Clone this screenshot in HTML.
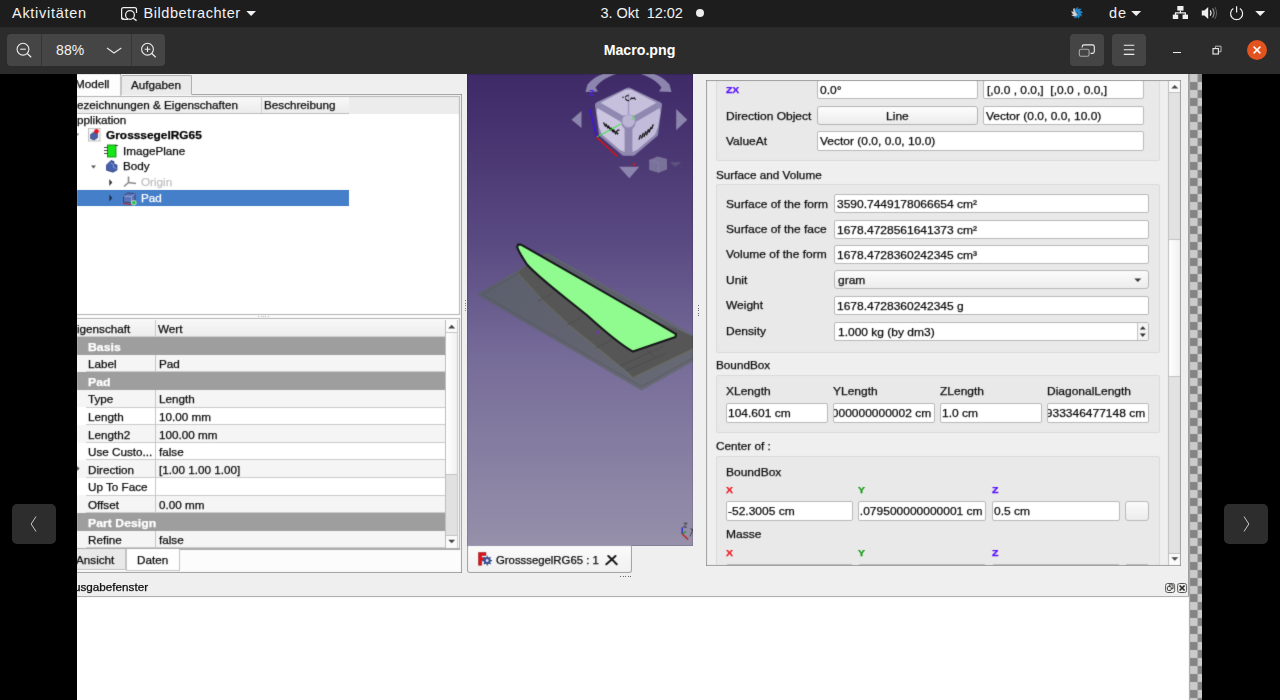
<!DOCTYPE html>
<html>
<head>
<meta charset="utf-8">
<title>Macro.png</title>
<style>
*{box-sizing:border-box;margin:0;padding:0}
html,body{width:1280px;height:700px;overflow:hidden;background:#000}
body{font-family:"Liberation Sans",sans-serif;position:relative;color:#fff}
.abs{position:absolute}
#topbar{left:0;top:0;width:1280px;height:27px;background:#1d1d1d;font-size:14.5px;color:#f2f2f2}
#topbar span{position:absolute;top:5.4px;white-space:nowrap}
#hdr{left:0;top:27px;width:1280px;height:47px;background:#2c2c2c;box-shadow:inset 0 1px 0 #272727}
.hbtn{position:absolute;background:#454545;border-radius:4px}
/* image area */
#img{left:77px;top:74px;width:1125px;height:626px;background:#efefef;overflow:hidden;color:#0e0e0e;font-size:11.5px}
#pg{filter:url(#soft)}
#img .t{position:absolute;white-space:nowrap;line-height:14.7px;-webkit-text-stroke:0.25px currentColor;transform:scaleX(1.09);transform-origin:0 0}
.box{position:absolute;background:#fff;border:1px solid #b9b9b9;border-radius:2px}
.grp{position:absolute;border:1px solid #dadada;background:#e9e9e9;border-radius:2px}
</style>
</head>
<body>
<!-- GNOME top bar -->
<div id="topbar" class="abs">
  <span style="left:12px;letter-spacing:0.72px">Aktivitäten</span>
  <svg class="abs" style="left:119px;top:5px" width="20" height="18" viewBox="119 5 20 18">
    <path d="M128 19.3 H123.5 Q121.6 19.3 121.6 17.4 V9.6 Q121.6 7.7 123.5 7.7 H134.6 Q136.5 7.7 136.5 9.6 V13" fill="none" stroke="#f0f0f0" stroke-width="1.2"/>
    <path d="M121.6 17 l3.5 2.3 h-3.5z" fill="#f0f0f0"/>
    <circle cx="130" cy="15" r="4.4" fill="none" stroke="#f0f0f0" stroke-width="1.2"/>
    <path d="M133.2 18.2 L136.6 20.6" stroke="#f0f0f0" stroke-width="1.3"/>
  </svg>
  <span style="left:143.5px;letter-spacing:0.55px">Bildbetrachter</span>
  <svg class="abs" style="left:246px;top:10px" width="11" height="7"><path d="M0.3 1 h9.7 l-4.85 5z" fill="#f0f0f0"/></svg>
  <span style="left:600.5px;letter-spacing:-0.05px">3. Okt&nbsp; 12:02</span>
  <div class="abs" style="left:696px;top:9px;width:8px;height:8px;border-radius:50%;background:#eee"></div>
  <svg class="abs" style="left:1070px;top:6px" width="14" height="14" viewBox="-7 -7 14 14"><path transform="rotate(0.0)" d="M0.4 -1.7 C 2.2 -2.8 4.6 -2.4 5.7 -0.1 C 4.0 -0.7 2.6 -0.2 1.5 1.3 Z" fill="#1f8bcc" stroke="#1f8bcc" stroke-width="0.35"/><path transform="rotate(40.0)" d="M0.4 -1.7 C 2.2 -2.8 4.6 -2.4 5.7 -0.1 C 4.0 -0.7 2.6 -0.2 1.5 1.3 Z" fill="#1f8bcc" stroke="#1f8bcc" stroke-width="0.35"/><path transform="rotate(80.0)" d="M0.4 -1.7 C 2.2 -2.8 4.6 -2.4 5.7 -0.1 C 4.0 -0.7 2.6 -0.2 1.5 1.3 Z" fill="#1f8bcc" stroke="#1f8bcc" stroke-width="0.35"/><path transform="rotate(120.0)" d="M0.4 -1.7 C 2.2 -2.8 4.6 -2.4 5.7 -0.1 C 4.0 -0.7 2.6 -0.2 1.5 1.3 Z" fill="#1f8bcc" stroke="#1f8bcc" stroke-width="0.35"/><path transform="rotate(160.0)" d="M0.4 -1.7 C 2.2 -2.8 4.6 -2.4 5.7 -0.1 C 4.0 -0.7 2.6 -0.2 1.5 1.3 Z" fill="#d6d6da" stroke="#d6d6da" stroke-width="0.35"/><path transform="rotate(200.0)" d="M0.4 -1.7 C 2.2 -2.8 4.6 -2.4 5.7 -0.1 C 4.0 -0.7 2.6 -0.2 1.5 1.3 Z" fill="#d6d6da" stroke="#d6d6da" stroke-width="0.35"/><path transform="rotate(240.0)" d="M0.4 -1.7 C 2.2 -2.8 4.6 -2.4 5.7 -0.1 C 4.0 -0.7 2.6 -0.2 1.5 1.3 Z" fill="#d6d6da" stroke="#d6d6da" stroke-width="0.35"/><path transform="rotate(280.0)" d="M0.4 -1.7 C 2.2 -2.8 4.6 -2.4 5.7 -0.1 C 4.0 -0.7 2.6 -0.2 1.5 1.3 Z" fill="#1f8bcc" stroke="#1f8bcc" stroke-width="0.35"/><path transform="rotate(320.0)" d="M0.4 -1.7 C 2.2 -2.8 4.6 -2.4 5.7 -0.1 C 4.0 -0.7 2.6 -0.2 1.5 1.3 Z" fill="#1f8bcc" stroke="#1f8bcc" stroke-width="0.35"/></svg>
  <span style="left:1109px;letter-spacing:0.9px">de</span>
  <svg class="abs" style="left:1131px;top:10px" width="11" height="7"><path d="M0.2 1 h10 l-5 5z" fill="#f0f0f0"/></svg>
  <svg class="abs" style="left:1172px;top:5px" width="17" height="15" viewBox="1172 5 17 15">
    <rect x="1177.3" y="6" width="6.2" height="4.6" fill="#f0f0f0"/>
    <rect x="1172.8" y="14.6" width="5.4" height="4.4" fill="#f0f0f0"/>
    <rect x="1182.6" y="14.6" width="5.4" height="4.4" fill="#f0f0f0"/>
    <path d="M1180.4 10.5 v2.3 M1175.5 15 v-2.2 h9.8 v2.2" stroke="#f0f0f0" stroke-width="1.2" fill="none"/>
  </svg>
  <svg class="abs" style="left:1201px;top:6px" width="17" height="14" viewBox="1201 6 17 14">
    <path d="M1201.8 10.6 h2.6 l3.8 -3.6 v12 l-3.8 -3.6 h-2.6z" fill="#f0f0f0"/>
    <path d="M1210.3 10.4 q1.6 2.6 0 5.2" stroke="#f0f0f0" stroke-width="1.2" fill="none"/>
    <path d="M1212.6 8.4 q3 4.6 0 9.2" stroke="#9a9a9a" stroke-width="1.1" fill="none"/>
    <path d="M1214.8 7 q3.6 6 0 12" stroke="#5e5e5e" stroke-width="1" fill="none"/>
  </svg>
  <svg class="abs" style="left:1229px;top:5px" width="16" height="16" viewBox="1229 5 16 16">
    <path d="M1233.3 8.6 A6 6 0 1 0 1239.9 8.6" stroke="#f0f0f0" stroke-width="1.2" fill="none"/>
    <path d="M1236.6 6.3 v6.3" stroke="#f0f0f0" stroke-width="1.2"/>
  </svg>
  <svg class="abs" style="left:1254.5px;top:10px" width="11" height="7"><path d="M0.2 1 h10 l-5 5z" fill="#f0f0f0"/></svg>
</div>
<!-- Header bar -->
<div id="hdr" class="abs">
  <div class="hbtn" style="left:7px;top:6.5px;width:158px;height:32.5px"></div>
  <div class="abs" style="left:41px;top:6.5px;width:1px;height:32.5px;background:#353535"></div>
  <div class="abs" style="left:130.5px;top:6.5px;width:1px;height:32.5px;background:#353535"></div>
  <svg class="abs" style="left:14px;top:14px" width="20" height="20" viewBox="14 41 20 20">
    <circle cx="23" cy="49.2" r="5.9" fill="none" stroke="#ececec" stroke-width="1.1"/>
    <path d="M27.3 53.5 L31.2 57.3" stroke="#ececec" stroke-width="1.2"/>
    <path d="M20.2 49.2 h5.6" stroke="#ececec" stroke-width="1.1"/>
  </svg>
  <span class="abs" style="left:56px;top:14.5px;font-size:14px;color:#f4f4f4;letter-spacing:0.15px">88%</span>
  <svg class="abs" style="left:105px;top:18px" width="18" height="10" viewBox="105 45 18 10"><path d="M107 48 L114 53 L121.3 48" stroke="#e6e6e6" stroke-width="1.1" fill="none"/></svg>
  <svg class="abs" style="left:138px;top:14px" width="20" height="20" viewBox="138 41 20 20">
    <circle cx="147.5" cy="49.2" r="5.9" fill="none" stroke="#ececec" stroke-width="1.1"/>
    <path d="M151.8 53.5 L155.7 57.3" stroke="#ececec" stroke-width="1.2"/>
    <path d="M144.7 49.2 h5.6 M147.5 46.4 v5.6" stroke="#ececec" stroke-width="1.1"/>
  </svg>
  <div class="abs" style="left:0;width:1280px;top:15.3px;text-align:center;font-weight:bold;font-size:14.2px;color:#fff;padding-right:1px">Macro.png</div>
  <div class="hbtn" style="left:1070px;top:6.5px;width:34.3px;height:32.5px"></div>
  <div class="hbtn" style="left:1112px;top:6.5px;width:34.3px;height:32.5px"></div>
  <svg class="abs" style="left:1076px;top:14px" width="22" height="18" viewBox="1076 41 22 18">
    <path d="M1082.2 47.5 V46.8 Q1082.2 44.9 1084.1 44.9 H1092.4 Q1094.3 44.9 1094.3 46.8 V51.5 Q1094.3 53.4 1092.4 53.4 H1090.6" fill="none" stroke="#f0f0f0" stroke-width="1.1"/>
    <rect x="1079.3" y="49.3" width="9.8" height="7" rx="1.8" fill="none" stroke="#a8a8a8" stroke-width="1.1"/>
  </svg>
  <svg class="abs" style="left:1122px;top:16px" width="14" height="14" viewBox="1122 43 14 14"><path d="M1123.8 45.2 h10.5 M1123.8 49.8 h10.5 M1123.8 54.4 h10.5" stroke="#f0f0f0" stroke-width="1.1"/></svg>
  <div class="abs" style="left:1173px;top:25px;width:8.2px;height:1.1px;background:#f0f0f0"></div>
  <svg class="abs" style="left:1210px;top:17px" width="14" height="12" viewBox="1210 44 14 12">
    <rect x="1213" y="48.6" width="5.4" height="5.4" fill="none" stroke="#f0f0f0" stroke-width="1.1"/>
    <path d="M1215.4 48.3 V46.2 H1221 V51.8 H1218.8" fill="none" stroke="#b8b8b8" stroke-width="1"/>
  </svg>
  <div class="abs" style="left:1247px;top:13px;width:20px;height:20px;border-radius:50%;background:#e2531f"></div>
  <svg class="abs" style="left:1251px;top:17px" width="12" height="12"><path d="M2.6 2.6 L9.4 9.4 M9.4 2.6 L2.6 9.4" stroke="#fff" stroke-width="1.5"/></svg>
</div>
<!-- overlay nav buttons -->
<div class="abs" style="left:12px;top:504px;width:44px;height:40px;border-radius:5px;background:#2d2d2d"></div>
<svg class="abs" style="left:28px;top:514px" width="12" height="20"><path d="M8 2.5 L3.2 10 L8 17.5" stroke="#d8d8d8" stroke-width="0.9" fill="none"/></svg>
<div class="abs" style="left:1224px;top:504px;width:44px;height:40px;border-radius:5px;background:#2d2d2d"></div>
<svg class="abs" style="left:1240px;top:514px" width="12" height="20"><path d="M4 2.5 L8.8 10 L4 17.5" stroke="#d8d8d8" stroke-width="0.9" fill="none"/></svg>
<svg width="0" height="0" style="position:absolute"><defs><filter id="soft" x="0" y="0" width="100%" height="100%" color-interpolation-filters="sRGB"><feConvolveMatrix order="3" kernelMatrix="0.0121 0.0858 0.0121 0.0858 0.6084 0.0858 0.0121 0.0858 0.0121" divisor="1" edgeMode="duplicate" preserveAlpha="true"/></filter></defs></svg>
<!-- Image -->
<div id="img" class="abs">
<div id="pg" class="abs" style="left:-77px;top:-74px;width:1280px;height:700px">
<!-- left dock (white bg) -->
<div class="abs" style="left:70px;top:93.8px;width:392px;height:479px;background:#fcfcfc;border:1px solid #b2b2b2"></div>
<!-- tabs top -->
<div class="abs" style="left:120.5px;top:75px;width:71.5px;height:20px;background:#ebebeb;border:1px solid #c3c3c3;border-bottom:none;border-radius:2px 2px 0 0"></div>
<div class="abs" style="left:70px;top:74px;width:50.5px;height:22px;background:#fdfdfd;border-right:1px solid #c3c3c3"></div>
<span class="t" style="left:76.5px;top:76.5px;font-size:10.73px;margin-left:-1.5px">Modell</span>
<span class="t" style="left:130.5px;top:77.5px;font-size:10.73px">Aufgaben</span>
<!-- tree frame -->
<div class="abs" style="left:70px;top:95.8px;width:390px;height:219px;background:#fff;border:1px solid #b2b2b2"></div><div class="abs" style="left:77px;top:96.8px;width:382px;height:16.8px;background:#ececec"></div>
<div class="abs" style="left:77px;top:96.8px;width:272px;height:17.2px;background:linear-gradient(#f8f8f8,#ececec);border-bottom:1px solid #bdbdbd"></div>
<div class="abs" style="left:261px;top:96px;width:1px;height:17px;background:#cfcfcf"></div>

<span class="t" style="left:77px;top:97.5px;font-size:10.73px">ezeichnungen &amp; Eigenschaften</span>
<span class="t" style="left:263.5px;top:97.5px;font-size:10.73px">Beschreibung</span>
<span class="t" style="left:77px;top:113px;font-size:10.73px">pplikation</span>
<span class="t" style="left:106px;top:127.5px;font-size:10.92px;font-weight:bold;color:#000">GrosssegelRG65</span>
<span class="t" style="left:122.7px;top:143.5px;font-size:10.73px">ImagePlane</span>
<span class="t" style="left:122.7px;top:159px;font-size:10.73px">Body</span>
<span class="t" style="left:140.7px;top:175px;font-size:10.73px;color:#c2c2c2">Origin</span>
<div class="abs" style="left:77px;top:190px;width:272px;height:16px;background:#467fc9;border-top:1px solid #3b74c2;border-bottom:1px solid #3b74c2"></div>
<span class="t" style="left:140.7px;top:191px;font-size:10.73px;color:#fff">Pad</span>
<!-- tree icons -->
<svg class="abs" style="left:77px;top:126px" width="70" height="82" viewBox="77 126 70 82">
  <!-- expander for doc (cut) -->
  <path d="M77 133.5 l2 0 l-1.5 2.5z" fill="#555"/>
  <!-- doc icon -->
  <rect x="88.5" y="128.5" width="11.5" height="12.5" fill="#f4f4f4" stroke="#b5b5b5" stroke-width="0.8"/>
  <path d="M90.5 134.5 l3.5 -2.5 l3.5 1.2 l0 4.5 l-3.3 2.3 l-3.7 -1.3z" fill="#4a5fa8" stroke="#2c3766" stroke-width="0.6"/>
  <circle cx="96.5" cy="131.3" r="2.3" fill="#e6141e"/>
  <!-- imageplane icon -->
  <rect x="107.5" y="145" width="8.5" height="12" fill="#17e617" stroke="#0a7a0a" stroke-width="0.8"/>
  <path d="M104 147.5h4M104 150.5h4M104 153.5h4M115 145.5h3" stroke="#333" stroke-width="0.9"/>
  <!-- body expander -->
  <path d="M91 165.5 l5 0 l-2.5 3z" fill="#555"/>
  <!-- body icon -->
  <path d="M106.5 165 l4.5 -4.5 l3 1 l0 2.5 l3 1 l0 5 l-4 2.2 l-6.5 -2z" fill="#4560ad" stroke="#27376e" stroke-width="0.7"/>
  <path d="M110.5 163 l3 1.5 l0 3 l3 1" fill="none" stroke="#9fb0e0" stroke-width="0.7"/>
  <!-- origin expander -->
  <path d="M109.3 179 l0 7 l3 -3.5z" fill="#333"/>
  <!-- origin icon -->
  <path d="M128.5 176.5 l0 6 l-4.5 4 M128.5 182.5 l7.5 1" fill="none" stroke="#8a8a8a" stroke-width="1.6"/>
  <!-- pad expander -->
  <path d="M109.3 194.5 l0 7 l3 -3.5z" fill="#1c2d4a"/>
  <!-- pad icon -->
  <path d="M123.5 196 l4 -3 l7.5 0.5 l0 6.5 l-3.5 3 l-8 -1z" fill="#5b73b8" stroke="#2a3560" stroke-width="0.8"/>
  <path d="M123.5 196 l8 0.7 l3.5 -3.2 M131.5 196.7 l0 6.3" fill="none" stroke="#aab8e3" stroke-width="0.7"/>
  <path d="M123 203.5 l8 1" stroke="#c22" stroke-width="1.2"/>
  <circle cx="133.8" cy="202.8" r="2.4" fill="#35c24a" stroke="#fff" stroke-width="0.6"/>
</svg>
<!-- splitter dots -->
<div class="abs" style="left:258px;top:316px;width:12px;height:1px;background:repeating-linear-gradient(90deg,#aaa 0 1px,transparent 1px 2.5px)"></div>
<!-- property frame -->
<div class="abs" style="left:70px;top:318.1px;width:390px;height:231.4px;background:#fff;border:1px solid #b0b0b0;border-bottom-width:1.3px"></div>
<div class="abs" style="left:77px;top:319.5px;width:369px;height:17.5px;background:linear-gradient(#f7f7f7,#ededed);border-bottom:1px solid #cfcfcf"></div>
<span class="t" style="left:77px;top:321.5px;font-size:10.73px">igenschaft</span>
<span class="t" style="left:158px;top:321.5px;font-size:10.73px">Wert</span>
<div id="props">
<div class="abs" style="left:77px;top:337.0px;width:368.5px;height:17.8px;background:#9e9e9e"></div>
<div class="abs" style="left:77px;top:354.6px;width:368.5px;height:17.8px;background:#f5f5f5"></div>
<div class="abs" style="left:77px;top:372.2px;width:368.5px;height:17.8px;background:#9e9e9e"></div>
<div class="abs" style="left:77px;top:389.8px;width:368.5px;height:17.8px;background:#f5f5f5"></div>
<div class="abs" style="left:77px;top:407.4px;width:368.5px;height:17.8px;background:#ffffff"></div>
<div class="abs" style="left:77px;top:425.0px;width:368.5px;height:17.8px;background:#f5f5f5"></div>
<div class="abs" style="left:77px;top:442.6px;width:368.5px;height:17.8px;background:#ffffff"></div>
<div class="abs" style="left:77px;top:460.2px;width:368.5px;height:17.8px;background:#f5f5f5"></div>
<div class="abs" style="left:77px;top:477.8px;width:368.5px;height:17.8px;background:#ffffff"></div>
<div class="abs" style="left:77px;top:495.4px;width:368.5px;height:17.8px;background:#f5f5f5"></div>
<div class="abs" style="left:77px;top:513.0px;width:368.5px;height:17.8px;background:#9e9e9e"></div>
<div class="abs" style="left:77px;top:530.6px;width:368.5px;height:17.8px;background:#f5f5f5"></div>
<div class="abs" style="left:86px;top:371.3px;width:359px;height:1.1px;background:#cbcbcb"></div>
<div class="abs" style="left:155.1px;top:354.6px;width:1.1px;height:17.6px;background:#c6c6c6"></div>
<div class="abs" style="left:86px;top:406.5px;width:359px;height:1.1px;background:#cbcbcb"></div>
<div class="abs" style="left:155.1px;top:389.8px;width:1.1px;height:17.6px;background:#c6c6c6"></div>
<div class="abs" style="left:86px;top:424.1px;width:359px;height:1.1px;background:#cbcbcb"></div>
<div class="abs" style="left:155.1px;top:407.4px;width:1.1px;height:17.6px;background:#c6c6c6"></div>
<div class="abs" style="left:86px;top:441.7px;width:359px;height:1.1px;background:#cbcbcb"></div>
<div class="abs" style="left:155.1px;top:425.0px;width:1.1px;height:17.6px;background:#c6c6c6"></div>
<div class="abs" style="left:86px;top:459.3px;width:359px;height:1.1px;background:#cbcbcb"></div>
<div class="abs" style="left:155.1px;top:442.6px;width:1.1px;height:17.6px;background:#c6c6c6"></div>
<div class="abs" style="left:86px;top:476.9px;width:359px;height:1.1px;background:#cbcbcb"></div>
<div class="abs" style="left:155.1px;top:460.2px;width:1.1px;height:17.6px;background:#c6c6c6"></div>
<div class="abs" style="left:86px;top:494.5px;width:359px;height:1.1px;background:#cbcbcb"></div>
<div class="abs" style="left:155.1px;top:477.8px;width:1.1px;height:17.6px;background:#c6c6c6"></div>
<div class="abs" style="left:86px;top:512.1px;width:359px;height:1.1px;background:#cbcbcb"></div>
<div class="abs" style="left:155.1px;top:495.4px;width:1.1px;height:17.6px;background:#c6c6c6"></div>
<div class="abs" style="left:86px;top:547.3px;width:359px;height:1.1px;background:#cbcbcb"></div>
<div class="abs" style="left:155.1px;top:530.6px;width:1.1px;height:17.6px;background:#c6c6c6"></div>
<span class="t" style="left:88.2px;top:339.9px;font-size:11.28px;font-weight:bold;color:#fff">Basis</span>
<span class="t" style="left:88.2px;top:357.1px;font-size:10.73px">Label</span>
<span class="t" style="left:159.2px;top:357.1px;font-size:10.73px">Pad</span>
<span class="t" style="left:88.2px;top:375.1px;font-size:11.28px;font-weight:bold;color:#fff">Pad</span>
<span class="t" style="left:88.2px;top:392.3px;font-size:10.73px">Type</span>
<span class="t" style="left:159.2px;top:392.3px;font-size:10.73px">Length</span>
<span class="t" style="left:88.2px;top:409.9px;font-size:10.73px">Length</span>
<span class="t" style="left:159.2px;top:409.9px;font-size:10.73px">10.00 mm</span>
<span class="t" style="left:88.2px;top:427.5px;font-size:10.73px">Length2</span>
<span class="t" style="left:159.2px;top:427.5px;font-size:10.73px">100.00 mm</span>
<span class="t" style="left:88.2px;top:445.1px;font-size:10.73px">Use Custo...</span>
<span class="t" style="left:159.2px;top:445.1px;font-size:10.73px">false</span>
<span class="t" style="left:88.2px;top:462.7px;font-size:10.73px">Direction</span>
<span class="t" style="left:159.2px;top:462.7px;font-size:10.73px">[1.00 1.00 1.00]</span>
<span class="t" style="left:88.2px;top:480.3px;font-size:10.73px">Up To Face</span>
<span class="t" style="left:88.2px;top:497.9px;font-size:10.73px">Offset</span>
<span class="t" style="left:159.2px;top:497.9px;font-size:10.73px">0.00 mm</span>
<span class="t" style="left:88.2px;top:515.9px;font-size:11.28px;font-weight:bold;color:#fff">Part Design</span>
<span class="t" style="left:88.2px;top:533.1px;font-size:10.73px">Refine</span>
<span class="t" style="left:159.2px;top:533.1px;font-size:10.73px">false</span>
<svg class="abs" style="left:77px;top:465px" width="4" height="8"><path d="M0 1 l0 5 l2.5 -2.5z" fill="#444"/></svg>
</div>
<div class="abs" style="left:155.1px;top:320px;width:1.1px;height:17px;background:#c9c9c9"></div>
<!-- prop scrollbar -->
<div class="abs" style="left:445px;top:319.5px;width:13.3px;height:229px;background:#e1e1e1;border-left:1px solid #bdbdbd;border-right:1px solid #c9c9c9"></div>
<div class="abs" style="left:446px;top:320px;width:11.3px;height:12.8px;background:#fbfbfb;border-bottom:1px solid #c4c4c4"></div>
<div class="abs" style="left:446px;top:332.8px;width:11.3px;height:142.2px;background:linear-gradient(90deg,#ffffff,#f1f1f1);border-bottom:1px solid #c4c4c4"></div>
<div class="abs" style="left:446px;top:535px;width:11.3px;height:13.5px;background:#fbfbfb;border-top:1px solid #c4c4c4"></div>
<svg class="abs" style="left:446px;top:320px" width="12" height="228"><path d="M2.2 8.4 l7 0 l-3.5 -3.6z M2.2 219.8 l7 0 l-3.5 3.4z" fill="#444"/></svg>
<div class="abs" style="left:70px;top:548.2px;width:390px;height:1.4px;background:#ababab"></div>
<!-- bottom tabs -->
<div class="abs" style="left:70px;top:549px;width:56px;height:20.5px;background:#e9e9e9;border:1px solid #c3c3c3;border-top:none"></div>
<div class="abs" style="left:126px;top:549px;width:54px;height:21.5px;background:#fefefe;border:1px solid #c3c3c3;border-top:none"></div>
<span class="t" style="left:77px;top:552.5px;font-size:10.73px;margin-left:-1.5px">Ansicht</span>
<span class="t" style="left:136.5px;top:553px;font-size:10.73px">Daten</span>

<!-- 3D view -->
<div class="abs" style="left:467.3px;top:74px;width:225.7px;height:472px;background:linear-gradient(#3f2a68 0%,#46336f 12%,#5a4a82 36%,#766c99 60%,#9690aa 100%)"></div>
<svg class="abs" style="left:467px;top:74px" width="226" height="472" viewBox="467 74 226 472">
  <!-- image plane -->
  <defs><linearGradient id="pl" x1="0" y1="0" x2="1" y2="0.6"><stop offset="0" stop-color="#5a5d6b"/><stop offset="1" stop-color="#666873"/></linearGradient></defs>
  <polygon points="476.5,294.5 547,252.8 693,334.5 693,361.8 641.5,390.5" fill="url(#pl)"/>
  <path d="M693 338 L547 256 L482 294.5 L641.5 386.5 L693 358" fill="none" stroke="#4f515d" stroke-width="0.8" opacity="0.7"/>
  <polygon points="517.5,272.5 530,262 560,280 693,336.5 693,348.8 632.8,377.4 628,372.2 605.2,354 571,326.5 543.5,301" fill="#565657"/>
  <path d="M517.5 272.5 L543.5 301 L571 326.5 L605.2 354 L632.8 377.4 L693 348.8" stroke="#74774f" stroke-width="0.7" fill="none" opacity="0.8"/>
  <path d="M538 301 l14 -7 M567 325 l14 -7 M596 348 l16 -8 M620 366 l44 -20 M626 371 l40 -18 M655 357 l-8 -7" stroke="#48484a" stroke-width="0.7" fill="none"/>
  <rect x="596" y="331" width="3" height="3" fill="#6a3f96"/>
  <!-- sail -->
  <path d="M518 244.6 L521 244.6 L582.3 279.6 L641.8 313.9 L676 334.2 L675.5 337 L633 351.6 C 626 348 612 338 587 315.3 C 566 298 540 279 527 264.5 C 522 257 518 250 517.2 247 Z" fill="#90fb8e" stroke="#16181a" stroke-width="2.1" stroke-linejoin="round"/>
  <!-- nav arrows -->
  <g fill="#8c85ad">
    <path d="M571.5 119.7 L581.5 111 L581.5 128 Z"/>
    <path d="M687.3 119.7 L676.2 109 L676.2 130.3 Z"/>
    <path d="M619 166.8 L639.3 166.8 L629.3 178.2 Z"/>
    <path d="M585.5 92 L587.5 84.5 C 592 79 598 75.5 603 74 L616 74 C 606 77.5 600 81.5 595.5 87.5 L598 91.5 Z"/>
    <path d="M671.5 92 L669.5 84.5 C 665 79 659 75.5 654 74 L641 74 C 651 77.5 657 81.5 661.5 87.5 L659 91.5 Z"/>
  </g>
  <!-- nav cube -->
  <polygon points="628.5,90.5 659,105 655,134 633,152.8 624,152.8 602,134 598,105" fill="#8f88b0" stroke="#8f88b0" stroke-width="6" stroke-linejoin="round"/>
  <polygon points="628.5,89.5 633,90.5 656.5,102.8 634.5,115.5 622.5,115.5 600.5,102.8 624,90.5" fill="#c6c0dd"/>
  <polygon points="597.3,108 621.3,122 621.8,125.5 624.6,129 624.6,152 620,150 602,134.5 599,127 596.6,112" fill="#cbc5e1"/>
  <polygon points="659.7,108 635.7,122 635.2,125.5 632.4,129 632.4,152 637,150 655,134.5 658,127 660.4,112" fill="#c2bcda"/>
  <circle cx="628.5" cy="121" r="6.3" fill="#bcb5d5" stroke="#aaa3c8" stroke-width="0.7"/>
  <path d="M628.5 93 L628.5 115" stroke="#a39cc2" stroke-width="1.5"/>
  <path d="M625 89.3 l3.5 3.8 l3.5 -3.8" fill="none" stroke="#d8d3ea" stroke-width="0.8"/>
  <!-- cube face labels -->
  <path d="M622.2 97.3 h1.6 M625 97.5 l1.6 -1.8 l2.2 0.1 M625.2 98.6 l1.6 1.6 l2.4 0.4 M630.2 99.6 l1.4 -1.6 l1.4 0.6 l1.2 -0.8 l1.4 2" fill="none" stroke="#101010" stroke-width="1.1"/>
  <path d="M603.5 122.5 l2.2 4.2 M605.8 123.8 l2.4 4.6 M608.2 125.6 l2.6 4.8 M610.8 127.6 l2.6 4.8 M613.4 129.4 l2.6 5 M616 130.8 l2 3.6 M617 130.6 l2.4 -0.8" fill="none" stroke="#121212" stroke-width="1.35"/>
  <path d="M639 139.6 l1.6 -4.6 M641.4 138.4 l2 -5.4 M643.8 137 l2.2 -5.8 M646.4 135.2 l2.2 -6 M649 132.6 l2 -5.4 M651.6 129 l1.6 -4.6" fill="none" stroke="#121212" stroke-width="1.35"/>
  <!-- axes -->
  <path d="M590 109.4 L596.5 137.2" stroke="#3a12ee" stroke-width="1.4"/>
  <path d="M596.5 137.2 L620.8 124" stroke="#2be82b" stroke-width="1"/>
  <path d="M632 120 l2.5 -4.5 M633 116 l1.2 2" stroke="#3fe83f" stroke-width="0.9"/>
  <path d="M596.5 137.2 L617.4 156.2" stroke="#e40f0f" stroke-width="1.3"/>
  <path d="M589.5 90.5 h4 l-4 4.5 h4.5" stroke="#4a22ee" stroke-width="1" fill="none"/>
  <path d="M632.5 163 l3 4 M635.8 162.5 l-2 2.5" stroke="#e01515" stroke-width="0.9" fill="none"/>
  <!-- mini cube -->
  <path d="M649.2 160 l8.5 -3.5 l9.3 2.5 l0 10.5 l-8.5 3.2 l-9.3 -2.7z" fill="#7a7399"/>
  <path d="M649.2 160 l9.3 2.7 l0 10" fill="none" stroke="#8a83a8" stroke-width="0.6"/>
  <path d="M669.7 162.2 l11.6 0 l-5.8 4.6z" fill="#5c547f"/>
  <!-- axis cross -->
  <path d="M682.2 527.5 l0 6.5" stroke="#2b1fd0" stroke-width="1.3"/>
  <path d="M682.2 534 l4 -2.5" stroke="#1aa01a" stroke-width="1.2"/>
  <path d="M682.2 534 l6 5.5" stroke="#c01818" stroke-width="1.2"/>
  <path d="M683.5 523.2 h3.5 l-3.5 4 h3.5" stroke="#222" stroke-width="0.7" fill="none"/>
  <path d="M690.5 528 l2 2.5 l-2.5 6 M693 529 l-1 1.5" stroke="#222" stroke-width="0.7" fill="none"/>
</svg>
<!-- view splitter dots -->
<div class="abs" style="left:697.5px;top:305px;width:1px;height:12px;background:repeating-linear-gradient(#aaa 0 1px,transparent 1px 2.5px)"></div>
<div class="abs" style="left:465px;top:300px;width:1px;height:12px;background:repeating-linear-gradient(#d4d4d4 0 1px,transparent 1px 2.5px)"></div>
<!-- view tab -->
<div class="abs" style="left:467.3px;top:546px;width:164.5px;height:26.8px;background:linear-gradient(#fafafa,#f1f1f1);border:1px solid #b4b4b4;border-top:none;border-radius:0 0 3px 3px"></div>
<svg class="abs" style="left:477px;top:551px" width="16" height="16" viewBox="477 551 16 16">
  <path d="M478.5 552.5 h7.5 v3 h-4.3 v2.2 h3 v2.6 h-3 v5 h-3.2z" fill="#d8141c" stroke="#8d0d12" stroke-width="0.5"/>
  <circle cx="487.2" cy="560.6" r="3.6" fill="#4a64b5"/>
  <path d="M487.2 555.8 v9.6 M482.4 560.6 h9.6 M483.8 557.2 l6.8 6.8 M490.6 557.2 l-6.8 6.8" stroke="#2e417f" stroke-width="1.1"/>
  <circle cx="487.2" cy="560.6" r="1.5" fill="#dfe5f7"/>
</svg>
<span class="t" style="left:495.5px;top:553.9px;font-size:10.41px">GrosssegelRG65 : 1</span>
<svg class="abs" style="left:604px;top:554px" width="14" height="12" viewBox="604 554 14 12"><path d="M606.3 564.3 L612 559.2 L615.5 556 M608.3 556 L612 559.4 L616.7 564.3" stroke="#1a1a1a" stroke-width="2" fill="none" stroke-linecap="round"/></svg>
<div class="abs" style="left:620px;top:576px;width:12px;height:1px;background:repeating-linear-gradient(90deg,#aaa 0 1px,transparent 1px 2.5px)"></div>
<!-- right panel -->
<div class="abs" style="left:706px;top:80.3px;width:475px;height:486px;background:#efefef;border:1px solid #b3b3b3;overflow:hidden"><div class="abs" style="left:-707px;top:-81.3px;width:1280px;height:700px">
<div class="grp" style="left:716.3px;top:60px;width:443.5px;height:101px"></div>
<span class="t" style="left:726px;top:83px;font-weight:bold;color:#5a0fff;font-size:9.6px;transform:scaleX(1.08);transform-origin:0 0">ZX</span>
<div class="box" style="left:817px;top:80.3px;width:161px;height:19.2px;"><span class="t" style="left:1.6px;top:2.1px;font-size:11.01px;">0.0°</span></div>
<div class="box" style="left:983px;top:80.3px;width:161px;height:19.2px;"><span class="t" style="left:2.5px;top:2.1px;font-size:11.01px;">[,0.0 , 0.0,]&nbsp; [,0.0 , 0.0,]</span></div>
<span class="t" style="left:726px;top:109px;font-size:11.01px;">Direction Object</span>
<div class="box" style="left:817px;top:106.4px;width:161px;height:19px;background:linear-gradient(#fdfdfd,#ececec);border-color:#b4b4b4;border-radius:3px;text-align:center"><span class="t" style="display:inline-block;transform-origin:50% 0;position:static;font-size:11.01px;line-height:18.6px">Line</span></div>
<div class="box" style="left:983px;top:106.4px;width:161px;height:19px;"><span class="t" style="left:1.6px;top:2.0px;font-size:11.01px;">Vector (0.0, 0.0, 10.0)</span></div>
<span class="t" style="left:726px;top:134.4px;font-size:11.01px;">ValueAt</span>
<div class="box" style="left:817px;top:131.4px;width:327px;height:19.2px;"><span class="t" style="left:1.6px;top:2.1px;font-size:11.01px;">Vector (0.0, 0.0, 10.0)</span></div>
<span class="t" style="left:715.5px;top:168.3px;font-size:11.01px;font-size:10.78px">Surface and Volume</span>
<div class="grp" style="left:716.3px;top:184.3px;width:443.5px;height:168.3px"></div>
<span class="t" style="left:726px;top:196.6px;font-size:11.01px;">Surface of the form</span>
<div class="box" style="left:834px;top:194.1px;width:314.5px;height:19.2px;"><span class="t" style="left:1.6px;top:2.1px;font-size:11.01px;">3590.7449178066654 cm²</span></div>
<span class="t" style="left:726px;top:221.6px;font-size:11.01px;">Surface of the face</span>
<div class="box" style="left:834px;top:219.5px;width:314.5px;height:19.2px;"><span class="t" style="left:1.6px;top:2.1px;font-size:11.01px;">1678.4728561641373 cm²</span></div>
<span class="t" style="left:726px;top:247.4px;font-size:11.01px;">Volume of the form</span>
<div class="box" style="left:834px;top:244.9px;width:314.5px;height:19.2px;"><span class="t" style="left:1.6px;top:2.1px;font-size:11.01px;">1678.4728360242345 cm³</span></div>
<span class="t" style="left:726px;top:272.8px;font-size:11.01px;">Unit</span>
<div class="box" style="left:834px;top:270.3px;width:314.5px;height:19.2px;background:linear-gradient(#fbfbfb,#ededed);border-radius:3px"><span class="t" style="left:3.2px;top:2.1px;font-size:11.01px;">gram</span></div>
<svg class="abs" style="left:1134px;top:277.8px" width="8" height="5"><path d="M0.3 0.5 h7 l-3.5 3.6z" fill="#3a3a3a"/></svg>
<span class="t" style="left:726px;top:298.2px;font-size:11.01px;">Weight</span>
<div class="box" style="left:834px;top:295.7px;width:314.5px;height:19.2px;"><span class="t" style="left:1.6px;top:2.1px;font-size:11.01px;">1678.4728360242345 g</span></div>
<span class="t" style="left:726px;top:324.3px;font-size:11.01px;">Density</span>
<div class="box" style="left:834px;top:322px;width:314.5px;height:18.6px;"><span class="t" style="left:3.2px;top:2.1px;font-size:11.01px;">1.000 kg (by dm3)</span></div>
<div class="abs" style="left:1136.5px;top:323px;width:11px;height:16.6px;background:#f3f3f3;border-left:1px solid #c4c4c4"></div>
<svg class="abs" style="left:1138.5px;top:324.6px" width="8" height="14"><path d="M0.8 4.6 h6 l-3 -3.4z M0.8 8.6 h6 l-3 3.4z" fill="#333"/></svg>
<span class="t" style="left:715.5px;top:357.8px;font-size:11.01px;font-size:10.78px">BoundBox</span>
<div class="grp" style="left:716.3px;top:374.8px;width:443.5px;height:58px"></div>
<span class="t" style="left:726px;top:383.8px;font-size:11.01px;">XLength</span>
<div class="box" style="left:726px;top:403.4px;width:101.8px;height:19.7px;"><span class="t" style="left:1.1px;top:1.9px;font-size:11.01px;">104.601 cm</span></div>
<span class="t" style="left:833px;top:383.8px;font-size:11.01px;">YLength</span>
<div class="box" style="left:833px;top:403.4px;width:101.8px;height:19.7px;overflow:hidden"><span class="t" style="transform-origin:100% 0;right:2.5px;top:1.9px;font-size:11.01px">000000000002 cm</span></div>
<span class="t" style="left:940px;top:383.8px;font-size:11.01px;">ZLength</span>
<div class="box" style="left:940px;top:403.4px;width:101.8px;height:19.7px;"><span class="t" style="left:1.1px;top:1.9px;font-size:11.01px;">1.0 cm</span></div>
<span class="t" style="left:1047px;top:383.8px;font-size:11.01px;">DiagonalLength</span>
<div class="box" style="left:1047px;top:403.4px;width:101.8px;height:19.7px;overflow:hidden"><span class="t" style="transform-origin:100% 0;right:2.5px;top:1.9px;font-size:11.01px">933346477148 cm</span></div>
<span class="t" style="left:715.5px;top:439.3px;font-size:11.01px;font-size:10.78px">Center of :</span>
<div class="grp" style="left:716.3px;top:455.5px;width:443.5px;height:140px"></div>
<span class="t" style="left:726px;top:465.4px;font-size:11.01px;">BoundBox</span>
<span class="t" style="left:726px;top:482.6px;font-size:11.01px;font-weight:bold;font-size:9.63px;color:#f0141e">X</span>
<span class="t" style="left:858.3px;top:482.6px;font-size:11.01px;font-weight:bold;font-size:9.63px;color:#129a12">Y</span>
<span class="t" style="left:992px;top:482.6px;font-size:11.01px;font-weight:bold;font-size:9.63px;color:#5a0fff">Z</span>
<div class="box" style="left:726px;top:501px;width:127px;height:19.5px;"><span class="t" style="left:0.9px;top:2.1px;font-size:11.01px;">-52.3005 cm</span></div>
<div class="box" style="left:858.3px;top:501px;width:128px;height:19.5px;overflow:hidden"><span class="t" style="transform-origin:100% 0;right:2.5px;top:2.1px;font-size:11.01px">.079500000000001 cm</span></div>
<div class="box" style="left:992px;top:501px;width:127.5px;height:19.5px;"><span class="t" style="left:0.9px;top:2.1px;font-size:11.01px;">0.5 cm</span></div>
<div class="box" style="left:1125px;top:501px;width:23.5px;height:20px;background:linear-gradient(#fbfbfb,#ececec);border-radius:3px"></div>
<span class="t" style="left:726px;top:527.2px;font-size:11.01px;">Masse</span>
<span class="t" style="left:726px;top:545.6px;font-size:11.01px;font-weight:bold;font-size:9.63px;color:#f0141e">X</span>
<span class="t" style="left:858.3px;top:545.6px;font-size:11.01px;font-weight:bold;font-size:9.63px;color:#129a12">Y</span>
<span class="t" style="left:992px;top:545.6px;font-size:11.01px;font-weight:bold;font-size:9.63px;color:#5a0fff">Z</span>
<div class="box" style="left:726px;top:564px;width:127px;height:19.5px;"></div>
<div class="box" style="left:858.3px;top:564px;width:128px;height:19.5px;"></div>
<div class="box" style="left:992px;top:564px;width:127.5px;height:19.5px;"></div>
<div class="box" style="left:1125px;top:564px;width:23.5px;height:20px"></div>
<div class="abs" style="left:1168px;top:81.3px;width:13px;height:485px;background:#e2e2e2;border-left:1px solid #bdbdbd"></div>
<div class="abs" style="left:1169px;top:81.3px;width:12px;height:11.5px;background:#fbfbfb;border-bottom:1px solid #c2c2c2"></div>
<div class="abs" style="left:1169px;top:239.3px;width:12px;height:138px;background:linear-gradient(90deg,#ffffff,#f0f0f0);border-top:1px solid #c2c2c2;border-bottom:1px solid #c2c2c2"></div>
<div class="abs" style="left:1169px;top:552.7px;width:12px;height:13px;background:#fbfbfb;border-top:1px solid #c2c2c2"></div>
<svg class="abs" style="left:1169px;top:81px" width="12" height="486"><path d="M2.3 7.6 h7 l-3.5 -3.6z M2.3 476.2 h7 l-3.5 3.6z" fill="#444"/></svg>
</div></div>
<svg class="abs" style="left:1164px;top:582px" width="24" height="12" viewBox="1164 582 24 12"><rect x="1165.6" y="583.5" width="9" height="9" rx="2" fill="none" stroke="#5a5650" stroke-width="0.9"/><rect x="1167.4" y="586.6" width="3.8" height="3.8" rx="0.8" fill="none" stroke="#3a3a3a" stroke-width="1"/><path d="M1169.3 586.3 v-1.4 h3.7 v3.8 h-1.5" fill="none" stroke="#3a3a3a" stroke-width="1"/><rect x="1177.6" y="583.5" width="9" height="9" rx="2" fill="none" stroke="#5a5650" stroke-width="0.9"/><path d="M1179.6 585.5 l5 5 M1184.6 585.5 l-5 5" stroke="#2e2e2e" stroke-width="1.7"/></svg>
<div class="abs" style="left:1188.4px;top:66px;width:24px;height:640px;background:#cbcbcb repeating-conic-gradient(#848484 0 25%,#cbcbcb 0 50%) 0.6px 8px/16px 16px;border-left:1px solid #b5b5b5"></div>
<!-- output window -->
<span class="t" style="left:77px;top:580px;font-size:10.73px;margin-left:-3px">usgabefenster</span>
<div class="abs" style="left:70px;top:595.5px;width:1119px;height:110px;background:#fff;border-top:1px solid #bcbcbc"></div>
</div>
</div>
</body>
</html>
